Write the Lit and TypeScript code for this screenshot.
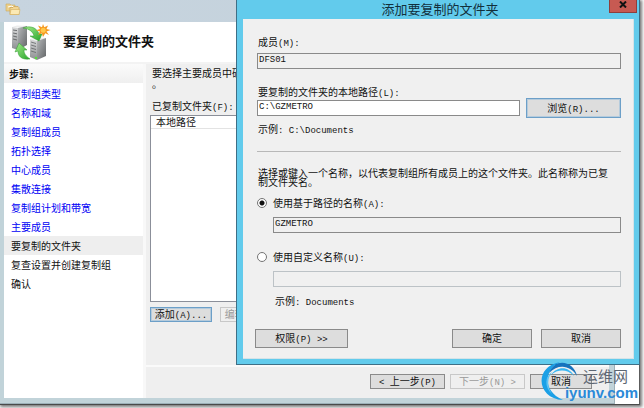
import { LitElement, html, css } from "lit";
import { customElement, property, state } from "lit/decorators.js";
import { classMap } from "lit/directives/class-map.js";

const STEPS = [
  "复制组类型",
  "名称和域",
  "复制组成员",
  "拓扑选择",
  "中心成员",
  "集散连接",
  "复制组计划和带宽",
  "主要成员",
  "要复制的文件夹",
  "复查设置并创建复制组",
  "确认",
];
const CURRENT = 8;

// Latin runs are set in a narrower monospace, as in a bitmap system font.
const mixed = (text: string) =>
  text
    .split(/([\x20-\x7e]+)/)
    .filter((part) => part !== "")
    .map((part) => (/^[\x20-\x7e]/.test(part) ? html`<span class="latin">${part}</span>` : part));

const shared = css`
  * {
    box-sizing: border-box;
  }
  .latin {
    font-family: "Liberation Mono", monospace;
    font-size: 9px;
    line-height: 0;
    white-space: pre;
  }
  button,
  input {
    font: inherit;
    color: inherit;
    margin: 0;
  }
  .button {
    display: block;
    line-height: 12px;
    padding: 0 0 1px;
    border: 1px solid #8a8a8a;
    background: #dddddd;
    white-space: nowrap;
  }
  .button.focus {
    border-color: #6c9fc8;
    box-shadow: inset 0 0 0 1px #b5cbdc;
  }
  .button:disabled {
    border-color: #c8c8c8;
    background: #efefef;
    color: #999999;
  }
`;

@customElement("wizard-window")
export class WizardWindow extends LitElement {
  static styles = [
    shared,
    css`
      :host {
        display: flex;
        flex-direction: column;
        border: 1px solid #9db0b8;
        border-width: 0 1px 1px 0;
        background: #c1d3d9;
        padding: 0 5px 5px 4px;
      }
      .titlebar {
        height: 22px;
        padding: 3px 0 0 5px;
        margin: 0 -5px 0 -4px;
        background: linear-gradient(90deg, #c7d4df, #c3d1da);
      }
      .titlebar svg {
        display: block;
      }
      .header {
        display: flex;
        align-items: center;
        gap: 10px;
        height: 40px;
        padding-left: 7px;
        background: #ffffff;
      }
      .header svg {
        align-self: flex-end;
      }
      h1 {
        margin: 0;
        padding-bottom: 4px;
        font-size: 13px;
        font-weight: 700;
      }
      .body {
        flex: 1;
        display: grid;
        grid-template-columns: 142px 1fr;
        border-top: 2px solid #f3f3f3;
        background: #efefef;
        min-height: 0;
      }
      .side {
        background: #ffffff;
        border-right: 3px solid #f8f8f8;
      }
      h2 {
        margin: 0 0 1px;
        padding-left: 5px;
        height: 19px;
        line-height: 19px;
        font-size: 10px;
        font-weight: 700;
        background: linear-gradient(#fbfbfb, #efefef);
      }
      ul {
        list-style: none;
        margin: 0;
        padding: 0;
      }
      li {
        height: 19px;
        line-height: 19px;
        padding-left: 7px;
      }
      li.current {
        background: #eeeeee;
      }
      a {
        color: #0000f5;
        text-decoration: none;
      }
      .main {
        display: flex;
        flex-direction: column;
        min-width: 0;
      }
      .content {
        flex: 1;
        padding: 3px 10px 0 4px;
        white-space: nowrap;
        overflow: hidden;
      }
      p {
        margin: 0 0 10px 2px;
        line-height: 11px;
      }
      .caption {
        display: block;
        height: 16px;
        line-height: 14px;
        margin-left: 2px;
      }
      table {
        width: 100%;
        height: 187px;
        border: 1px solid #8b8f99;
        border-spacing: 0;
        background: #ffffff;
      }
      th {
        height: 12px;
        line-height: 12px;
        padding: 0 5px;
        text-align: left;
        font-weight: 400;
        border-bottom: 1px solid #e3e3e3;
      }
      .actions {
        display: flex;
        gap: 8px;
        margin-top: 5px;
      }
      .actions .button {
        width: 62px;
        height: 15px;
      }
      .footer {
        display: flex;
        justify-content: flex-end;
        gap: 5px;
        border-top: 2px solid #fafafa;
        padding: 7px 17px 9px 0;
      }
      .footer .button {
        width: 75px;
        height: 15px;
      }
      .footer .cancel {
        width: 62px;
      }
    `,
  ];

  render() {
    return html`
      <div class="titlebar">
        <svg width="20" height="14" viewBox="0 0 20 14" aria-hidden="true">
          <path d="M1 1h4l1 1h4v6H1z" fill="#ecd08a" stroke="#cfa95a" stroke-width=".6" />
          <path d="M3 4l4-1 2 2" fill="none" stroke="#fff" />
          <path d="M5 4.500h3l1-1h4l1 1v7H5z" fill="#f1d593" stroke="#caa152" stroke-width=".7" />
          <path d="M5 11.500l1-5h9l-1 5z" fill="#fbe9b4" stroke="#d5b060" stroke-width=".6" />
        </svg>
      </div>
      <div class="header">
        <svg width="42" height="38" viewBox="0 0 42 38" aria-hidden="true">
          <defs>
            <linearGradient id="front" x2="0" y2="1">
              <stop offset="0" stop-color="#d9dadb" />
              <stop offset="1" stop-color="#8b8e90" />
            </linearGradient>
            <linearGradient id="edge" x2="1" y2="1">
              <stop offset="0" stop-color="#b6b8ba" />
              <stop offset="1" stop-color="#626567" />
            </linearGradient>
            <linearGradient id="leaf" x2="1" y2="1">
              <stop offset="0" stop-color="#a6ec8c" />
              <stop offset="1" stop-color="#27a52a" />
            </linearGradient>
          </defs>
          <path d="M1 3l5-1.500 11 .5-4 2z" fill="#eceded" />
          <path d="M1 3l6 1v22l-6-2z" fill="url(#front)" />
          <path d="M7 4l9-2v19l-9 5z" fill="url(#edge)" />
          <path d="M2 6l4 .6M2 9l4 .8M2 12l4 1M2 15l4 1" stroke="#55585a" stroke-width=".8" />
          <path d="M19 15l7-2 9 1-7 3z" fill="#eceded" />
          <path d="M19 15l7 2v19l-7-3z" fill="url(#front)" />
          <path d="M26 17l9-3v18l-9 4z" fill="url(#edge)" />
          <path d="M20 18l5 1.500M20 21l5 1.500M20 24l5 1.500M20 27l5 1.500" stroke="#606365" stroke-width=".8" />
          <circle cx="25" cy="34" r="1.200" fill="#56e23c" />
          <path d="M12 4c8-3 14 0 16 6h3l-3 7-9-5h4c-1-4-4-7-11-8z" fill="url(#leaf)" stroke="#2d9a2d" stroke-width=".5" />
          <path d="M19 35c-9 1-12-3-12-8l-3 1 4-9 8 7-3 0c0 4 2 6 6 9z" fill="url(#leaf)" stroke="#2d9a2d" stroke-width=".5" />
          <path d="M32 0l1.300 3.300L37 1.500l-1.500 3.500 4 1-4 1.500L38 11l-3.700-1.700L32 13l-1.200-3.700L27 11l2-3.500-4-1.200 4-1.300-2-3.500 4 1.800z" fill="#f59a22" />
          <circle cx="32.200" cy="6.300" r="2.500" fill="#ffc84a" />
        </svg>
        <h1>要复制的文件夹</h1>
      </div>
      <div class="body">
        <nav class="side">
          <h2>步骤<span class="latin">:</span></h2>
          <ul>
            ${STEPS.map(
              (step, i) => html`<li class=${classMap({ current: i === CURRENT })}>
                ${i < CURRENT ? html`<a href="#">${step}</a>` : step}
              </li>`
            )}
          </ul>
        </nav>
        <section class="main">
          <div class="content">
            <p>要选择主要成员中硬盘上的文件夹<br />。</p>
            <span class="caption" id="folders">${mixed("已复制文件夹(F):")}</span>
            <table aria-labelledby="folders">
              <thead>
                <tr><th>本地路径</th></tr>
              </thead>
              <tbody>
                <tr><td></td></tr>
              </tbody>
            </table>
            <div class="actions">
              <button class="button focus">${mixed("添加(A)...")}</button>
              <button class="button" disabled>${mixed("编辑(E)...")}</button>
            </div>
          </div>
          <div class="footer">
            <button class="button">${mixed("< 上一步(P)")}</button>
            <button class="button" disabled>${mixed("下一步(N) >")}</button>
            <button class="button cancel">取消</button>
          </div>
        </section>
      </div>
    `;
  }
}

@customElement("folder-dialog")
export class FolderDialog extends LitElement {
  @property() member = "DFS01";
  @property() path = "C:\\GZMETRO";
  @state() private custom = false;

  static styles = [
    shared,
    css`
      :host {
        display: block;
        padding: 0 5px 5px 6px;
        border: 1px solid #3f6f86;
        border-top: 0;
        background: #62cbec;
      }
      .titlebar {
        display: grid;
        grid-template-columns: 28px 1fr 28px;
        align-items: start;
        height: 19px;
        margin-right: -3px;
      }
      h1 {
        grid-column: 2;
        margin: 0;
        text-align: center;
        font-size: 13px;
        line-height: 17px;
        font-weight: 400;
        color: #12303c;
      }
      .close {
        display: flex;
        align-items: center;
        justify-content: center;
        height: 13px;
        padding: 0 0 3px;
        border: 1px solid #8f3f3c;
        border-top: 0;
        background: #c75a52;
      }
      form {
        display: flex;
        flex-direction: column;
        padding: 17px 12px 10px 14px;
        border: 1px solid #d5e3e8;
        border-width: 0 1px 1px 0;
        background: #f0f0f0;
      }
      label,
      .hint {
        line-height: 12px;
        padding-left: 1px;
      }
      .field {
        width: 100%;
        min-width: 0;
        height: 16px;
        padding: 0 1px 2px;
        border: 1px solid #8a8a8a;
        border-radius: 0;
        outline: 0;
        background: #f0f0f0;
        font-family: "Liberation Mono", monospace;
        font-size: 9px;
      }
      .field.editable {
        background: #ffffff;
      }
      .field:disabled {
        border-color: #bcc2c6;
      }
      .group {
        margin-bottom: 17px;
      }
      .group label,
      .group .field {
        display: block;
      }
      .group label {
        margin-bottom: 5px;
      }
      .path {
        display: grid;
        grid-template-columns: 1fr 95px;
        gap: 6px;
        align-items: center;
      }
      .path .button {
        height: 20px;
      }
      .hint {
        margin-top: 5px;
      }
      hr {
        width: 100%;
        margin: 16px 0;
        border: 0;
        border-top: 1px solid #b8b8b8;
      }
      p {
        margin: 0 0 11px;
        padding: 0 4px 0 1px;
        line-height: 9px;
      }
      .choice {
        display: grid;
        grid-template-columns: 10px 1fr;
        column-gap: 6px;
        row-gap: 8px;
        align-items: center;
        margin-bottom: 18px;
      }
      .choice label {
        padding: 0;
      }
      .choice .field,
      .choice .hint {
        grid-column: 2;
      }
      .choice .hint {
        margin: 0;
        padding-left: 2px;
      }
      .radio {
        appearance: none;
        width: 10px;
        height: 10px;
        border: 1px solid #747474;
        border-radius: 50%;
        background: #ffffff;
      }
      .radio:checked {
        background: radial-gradient(circle, #111111 2px, #ffffff 3px);
      }
      .buttons {
        display: flex;
        gap: 9px;
        margin: 4px 0 0 -2px;
      }
      .buttons .button {
        width: 80px;
        height: 19px;
      }
      .buttons .wide {
        width: 93px;
        margin-right: auto;
      }
    `,
  ];

  render() {
    return html`
      <div class="titlebar">
        <h1>添加要复制的文件夹</h1>
        <button class="close" aria-label="关闭">
          <svg width="8" height="7" viewBox="0 0 8 7"><path d="M1 .5l6 6M7 .5l-6 6" stroke="#111" stroke-width="2" /></svg>
        </button>
      </div>
      <form @submit=${(e: Event) => e.preventDefault()}>
        <div class="group">
          <label for="member">${mixed("成员(M):")}</label>
          <input id="member" class="field" readonly .value=${this.member} />
        </div>
        <label for="path">${mixed("要复制的文件夹的本地路径(L):")}</label>
        <div class="path">
          <input id="path" class="field editable" .value=${this.path} />
          <button type="button" class="button focus">${mixed("浏览(R)...")}</button>
        </div>
        <div class="hint">${mixed("示例: C:\\Documents")}</div>
        <hr />
        <p>选择或键入一个名称，以代表复制组所有成员上的这个文件夹。此名称称为已复制文件夹名。</p>
        <div class="choice">
          <input id="by-path" class="radio" type="radio" name="kind" .checked=${!this.custom} @change=${() => (this.custom = false)} />
          <label for="by-path">${mixed("使用基于路径的名称(A):")}</label>
          <input class="field" readonly aria-label="基于路径的名称" value="GZMETRO" />
        </div>
        <div class="choice">
          <input id="by-name" class="radio" type="radio" name="kind" .checked=${this.custom} @change=${() => (this.custom = true)} />
          <label for="by-name">${mixed("使用自定义名称(U):")}</label>
          <input class="field" aria-label="自定义名称" ?disabled=${!this.custom} />
          <div class="hint">${mixed("示例: Documents")}</div>
        </div>
        <div class="buttons">
          <button type="button" class="button wide">${mixed("权限(P) >>")}</button>
          <button class="button">确定</button>
          <button type="button" class="button">取消</button>
        </div>
      </form>
    `;
  }
}

@customElement("app-root")
export class AppRoot extends LitElement {
  static styles = css`
    :host {
      display: block;
      height: 100vh;
      overflow: hidden;
      background: #ffffff;
      color: #111111;
      font-family: "Noto Sans CJK SC", sans-serif;
      font-size: 10px;
    }
    .desktop {
      position: relative;
      display: flex;
      height: calc(100% - 4px);
      margin-right: 4px;
      padding-right: 24px;
      border-bottom: 1px solid #4a4a4a;
      border-right: 1px solid #5c5c5c;
      box-shadow: 1px 1px 3px 1px #777777;
    }
    wizard-window {
      flex: 1;
      min-width: 0;
    }
    folder-dialog {
      position: absolute;
      top: 0;
      left: 236px;
      right: -1px;
    }
    .mark {
      position: absolute;
      right: 1px;
      bottom: 3px;
      display: flex;
      align-items: flex-end;
    }
    .mark svg {
      margin-right: -14px;
    }
    .words {
      position: relative;
      display: flex;
      flex-direction: column;
      align-items: flex-end;
    }
    .name {
      font-size: 15px;
      line-height: 18px;
      padding-right: 10px;
      color: #5d6773;
    }
    .site {
      font-family: "Liberation Sans", sans-serif;
      font-size: 15px;
      line-height: 16px;
      font-weight: 700;
      color: #2b8ad8;
    }
  `;

  render() {
    return html`
      <div class="desktop">
        <wizard-window></wizard-window>
        <folder-dialog></folder-dialog>
        <div class="mark">
          <svg width="38" height="40" viewBox="0 0 38 40" aria-hidden="true">
            <path d="M22 39C-4 38-8 6 19 1 4 8 0 29 22 39z" fill="#1ba0e6" />
            <path d="M8 12C14-4 33 0 36 15 30 5 18 2 8 12z" fill="#1673bd" />
            <path d="M10 14C16 5 28 5 33 15 26 8 17 8 10 14z" fill="#39b6f2" />
            <path d="M11 33C3 26 4 15 11 11 6 17 6 26 11 33z" fill="#5cc3f4" />
          </svg>
          <div class="words">
            <span class="name">运维网</span>
            <span class="site">iyunv.com</span>
          </div>
        </div>
      </div>
    `;
  }
}
